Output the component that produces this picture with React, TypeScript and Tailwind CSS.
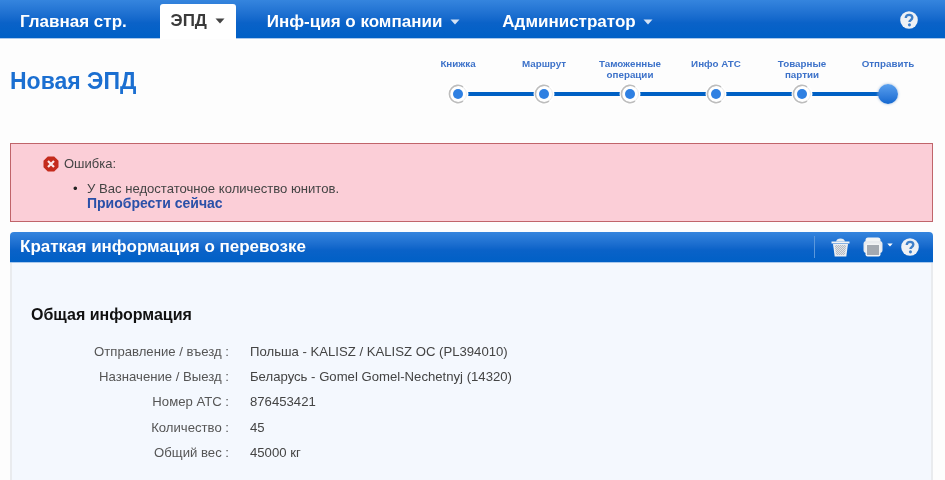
import React from 'react';

const font = { fontFamily: '"Liberation Sans", Arial, sans-serif' };

const Caret = ({ className }: { className: string }) => (
  <svg width="10" height="6" viewBox="0 0 10 6" className={className}>
    <path d="M0.5 0.5h9L5 5.5z" fill="currentColor" />
  </svg>
);

const HelpIcon = ({ size }: { size: number }) => (
  <svg width={size} height={size} viewBox="0 0 20 20">
    <circle cx="10" cy="10" r="9.8" fill="#eef1f5" />
    <path
      d="M6.4 7.8c0-2.2 1.6-3.5 3.7-3.5s3.6 1.2 3.6 3c0 1.5-.9 2.2-1.9 2.9-.9.6-1.3 1.1-1.3 2.1"
      fill="none"
      stroke="#3f7fc8"
      strokeWidth="2.6"
    />
    <circle cx="10.5" cy="15.4" r="1.7" fill="#3f7fc8" />
  </svg>
);

const TrashIcon = () => (
  <svg width="19" height="19" viewBox="0 0 19 19">
    <defs>
      <pattern id="mesh" width="2" height="2" patternUnits="userSpaceOnUse">
        <rect width="2" height="2" fill="#e0e3e7" />
        <rect width="1" height="1" fill="#b4b9c1" />
        <rect x="1" y="1" width="1" height="1" fill="#b4b9c1" />
      </pattern>
    </defs>
    <path d="M5 3.5c.5-2 2-3 4.5-3s4 1 4.5 3z" fill="#e9ecef" />
    <path d="M.5 3.5h18v2H.5z" fill="#f1f3f5" />
    <path d="M2 6h15l-1.7 12.5H3.7z" fill="#eceef1" />
    <path d="M3.8 7h11.4l-1.3 10H5.1z" fill="url(#mesh)" />
  </svg>
);

const PrintIcon = () => (
  <svg width="20" height="20" viewBox="0 0 20 20">
    <rect x="2.5" y="0.5" width="15" height="7" rx="2.5" fill="#f1f3f5" />
    <rect x="0.5" y="4" width="19" height="12" rx="3" fill="#e7eaee" />
    <rect x="2.5" y="6.500" width="15" height="13" rx="2" fill="#f1f3f5" />
    <rect x="4" y="8" width="12" height="10" fill="#a3a9b1" />
  </svg>
);

const ErrorIcon = () => (
  <svg width="16" height="16" viewBox="0 0 16 16">
    <path d="M4.8.5h6.400L15.5 4.8v6.400L11.2 15.5H4.800L.5 11.2V4.800z" fill="#c42b1c" />
    <path d="M5 5l6 6M11 5l-6 6" stroke="#fbeaea" strokeWidth="2.2" />
  </svg>
);

const StepDot = () => (
  <svg width="22" height="22" viewBox="0 0 22 22" className="relative">
    <circle cx="11" cy="11" r="10.5" fill="#fff" />
    <circle cx="11" cy="11" r="8.5" fill="none" stroke="#ececec" strokeWidth="1" />
    <path d="M16 3.800A8.700 8.700 0 1 0 16 18.200" fill="none" stroke="#bdbdbd" strokeWidth="1.600" />
    <circle cx="11" cy="11" r="5" fill="#2f80e2" />
  </svg>
);

const steps = [
  ['Книжка'],
  ['Маршрут'],
  ['Таможенные', 'операции'],
  ['Инфо АТС'],
  ['Товарные', 'партии'],
  ['Отправить'],
];

const rows = [
  ['Отправление / въезд :', 'Польша - KALISZ / KALISZ OC (PL394010)', 'h-[25px]'],
  ['Назначение / Выезд :', 'Беларусь - Gomel Gomel-Nechetnyj (14320)', 'h-[25px]'],
  ['Номер АТС :', '876453421', 'h-[26px]'],
  ['Количество :', '45', 'h-[25px]'],
  ['Общий вес :', '45000 кг', 'h-[25px]'],
];

const Stepper = () => (
  <div className="flex w-[516px] mt-[20px]">
    {steps.map((lines, i) => (
      <div key={i} className="w-[86px] flex flex-col items-center">
        <div className="h-[24px] text-[9.8px] leading-[10.5px] font-bold text-[#3d72c9] text-center whitespace-nowrap">
          {lines.map((line) => (
            <div key={line}>{line}</div>
          ))}
        </div>
        <div className="relative w-full h-[22px] flex items-center justify-center">
          {i < steps.length - 1 && (
            <div className="absolute left-1/2 w-[86px] h-[4px] bg-[#0060c4]" />
          )}
          {i < steps.length - 1 ? (
            <StepDot />
          ) : (
            <div className="relative w-[20px] h-[20px] rounded-full bg-gradient-to-b from-[#5aa0ee] to-[#1268d0] shadow-[0_0_3px_#9db8d8]" />
          )}
        </div>
      </div>
    ))}
  </div>
);

export default function App() {
  return (
    <div style={font} className="w-[945px] h-[480px] overflow-hidden bg-[#fdfdfd] blur-[0.5px]">
      <nav className="h-[39px] flex bg-gradient-to-b from-[#3585de] via-[#0a62c8] via-60% to-[#0060c6] border-b border-[#a9c8ec] text-white text-[17px] font-bold">
        <a className="ml-[20px] mt-[12px] leading-[19px]">Главная стр.</a>
        <a className="ml-[33px] mt-[4px] w-[76px] h-[35px] bg-white rounded-t-[3px] text-[#3a3a3a] flex items-center justify-center gap-[8px] pb-[2px]">
          ЭПД <Caret className="text-[#444]" />
        </a>
        <a className="ml-[31px] mt-[12px] leading-[19px] flex items-center gap-[8px] h-[19px]">
          Инф-ция о компании <Caret className="text-[#d5e3f5]" />
        </a>
        <a className="ml-[42px] mt-[12px] leading-[19px] flex items-center gap-[7px] h-[19px]">
          Администратор <Caret className="text-[#d5e3f5]" />
        </a>
        <div className="ml-auto mr-[27px] mt-[11px]">
          <HelpIcon size={18} />
        </div>
      </nav>

      <div className="h-[104px] flex justify-between pl-[10px] pr-[14px]">
        <h1 className="mt-[28px] text-[23px] leading-[28px] font-bold text-[#1b6fd1]">Новая ЭПД</h1>
        <Stepper />
      </div>

      <div className="ml-[10px] w-[923px] h-[79px] bg-[#fbced7] border border-[#c0646a] pt-[11px] text-[13.1px] text-[#444]">
        <div className="flex items-center gap-[5px] pl-[32px] h-[18px]">
          <ErrorIcon />
          <span className="text-[13px]">Ошибка:</span>
        </div>
        <div className="flex mt-[9px] pl-[62px] leading-[14px]">
          <span className="w-[14px] text-[#222]">•</span>
          <div>
            <div>У Вас недостаточное количество юнитов.</div>
            <a className="font-bold text-[14px] text-[#2a50a8]">Приобрести сейчас</a>
          </div>
        </div>
      </div>

      <section className="ml-[10px] mt-[10px] w-[923px]">
        <header className="h-[31px] rounded-t-[4px] bg-gradient-to-b from-[#3585de] via-[#0a62c8] via-60% to-[#0060c6] border-b border-[#a9c8ec] flex items-center pl-[10px] pr-[14px] text-white">
          <span className="text-[17px] font-bold">Краткая информация о перевозке</span>
          <div className="ml-auto h-[22px] w-px bg-[#5b98dc] mr-[16px]" />
          <TrashIcon />
          <div className="ml-[13px]">
            <PrintIcon />
          </div>
          <Caret className="ml-[4px] mb-[4px] text-white w-[6px] h-[4px]" />
          <div className="ml-[8px]">
            <HelpIcon size={18} />
          </div>
        </header>
        <div className="h-[218px] bg-[#f4f8fe] border-l-[2px] border-r-[2px] border-[#e9ebee] pl-[19px] pt-[42px]">
          <h2 className="text-[16px] leading-[20px] font-bold text-[#111]">Общая информация</h2>
          <div className="mt-[14px] text-[13.15px] text-[#444]">
            {rows.map(([label, value, rowHeight]) => (
              <div key={label} className={`flex items-center ${rowHeight}`}>
                <span className="w-[198px] text-right text-[#555]">{label}</span>
                <span className="ml-[21px]">{value}</span>
              </div>
            ))}
          </div>
        </div>
      </section>
    </div>
  );
}
